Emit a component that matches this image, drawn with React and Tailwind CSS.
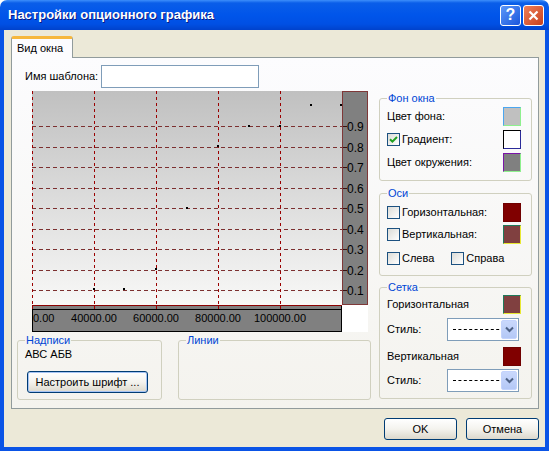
import React from 'react'

const FONT = "font-['Liberation_Sans',Arial,sans-serif]"

// grid geometry of the plot (px inside the chart svg)
const vLines = [0, 62, 124, 186, 248]
const xLabels = ['0.00', '40000.00', '60000.00', '80000.00', '100000.00']
const yLabels = ['0.9', '0.8', '0.7', '0.6', '0.5', '0.4', '0.3', '0.2', '0.1']
const dots = [[279, 14], [309, 14], [217, 35], [248, 35], [186, 55], [155, 117], [124, 178], [92, 198], [62, 198]]

function Chart() {
  return (
    <svg width="336" height="241" className="block ml-[15px] shrink-0" style={{ fontFamily: 'Liberation Sans, Arial, sans-serif' }}>
      <defs>
        <linearGradient id="plotbg" x1="0" y1="0" x2="0" y2="1">
          <stop offset="0" stopColor="#c0c0c0" />
          <stop offset="1" stopColor="#f8f8f7" />
        </linearGradient>
      </defs>
      <rect x="0" y="0" width="310" height="214" fill="url(#plotbg)" />
      {yLabels.map((_, i) => {
        const y = Math.round(35 + i * 20.5) + 0.5
        return <line key={i} x1="0" y1={y} x2="310" y2={y} stroke="#7c3030" strokeDasharray="4 3" />
      })}
      {vLines.map((x) => (
        <line key={x} x1={x + 0.5} y1="0" x2={x + 0.5} y2="214" stroke="#9a0000" strokeDasharray="3 3" />
      ))}
      {dots.map(([x, y], i) => <rect key={i} x={x - 1} y={y - 1} width="2" height="2" fill="#000" />)}

      {/* right value axis */}
      <rect x="310.5" y="0.5" width="25" height="213" fill="#808080" stroke="#7f3838" />
      {yLabels.map((t, i) => {
        const y = Math.round(35 + i * 20.5) + 0.5
        return (
          <g key={t}>
            <line x1="311" y1={y} x2="315" y2={y} stroke="#3a1010" />
            <text x="315" y={y + 4.5} fontSize="12" fill="#000">{t}</text>
          </g>
        )
      })}
      <rect x="310" y="214" width="26" height="27" fill="#fff" />

      {/* bottom axis */}
      <rect x="0.5" y="214.5" width="309" height="26" fill="#808080" stroke="#000" />
      <line x1="0" y1="214.5" x2="310" y2="214.5" stroke="#8b0000" />
      {vLines.map((x) => (
        <line key={x} x1={x + 0.5} y1="215" x2={x + 0.5} y2="218" stroke="#9a0000" />
      ))}
      <line x1="1" y1="218.5" x2="309" y2="218.5" stroke="#000" />
      {vLines.map((x, i) => (
        i === 0
          ? <text key={x} x="1" y="231" fontSize="11" fill="#000">{xLabels[i]}</text>
          : <text key={x} x={x} y="231" fontSize="11" textAnchor="middle" fill="#000">{xLabels[i]}</text>
      ))}
    </svg>
  )
}

function Check({ checked }) {
  return (
    <span className="w-[13px] h-[13px] shrink-0 border border-[#1c5180] bg-linear-to-br from-[#dcdcd7] to-white flex items-center justify-center">
      {checked && (
        <svg width="9" height="9" viewBox="0 0 9 9">
          <path d="M1 4.2 L3.4 6.6 L8 2" stroke="#21a121" strokeWidth="2" fill="none" />
        </svg>
      )}
    </span>
  )
}

function Swatch({ className }) {
  return <span className={`w-[18px] h-[19px] shrink-0 border ${className}`} />
}

function Group({ title, className, children }) {
  return (
    <fieldset className={`border border-[#d0d0bf] rounded-[3px] pl-[7px] pr-[10px] min-w-0 ${className}`}>
      <legend className="px-[1px] leading-[13px] text-[#0046d5]">{title}</legend>
      {children}
    </fieldset>
  )
}

function Combo({ className }) {
  return (
    <div className={`ml-auto mr-[2px] w-[72px] h-[23px] border border-[#7f9db9] bg-white flex items-stretch p-px ${className}`}>
      <div className="flex-1 flex items-center pl-[4px]">
        <svg width="48" height="3"><line x1="0" y1="1.5" x2="48" y2="1.5" stroke="#000" strokeDasharray="3 2.4" /></svg>
      </div>
      <div className="w-[17px] rounded-[2px] border border-[#c3d3fd] bg-linear-to-b from-[#c9d8fc] to-[#b4c8f6] flex items-center justify-center">
        <svg width="9" height="7" viewBox="0 0 9 7">
          <path d="M1 1.5 L4.5 5 L8 1.5" stroke="#4d6185" strokeWidth="2" fill="none" />
        </svg>
      </div>
    </div>
  )
}

function XpButton({ children, className }) {
  return (
    <button className={`h-[22px] rounded-[3px] border border-[#003c74] bg-linear-to-b from-white via-[#f4f3ee] to-[#dcd8cc] text-[11px] text-black ${className}`}>
      {children}
    </button>
  )
}

export default function App() {
  return (
    <div className={`w-[549px] h-[451px] flex flex-col text-[11px] text-black ${FONT}`}>
      {/* title bar */}
      <div className="h-[30px] shrink-0 rounded-t-[7px] bg-[linear-gradient(180deg,#3d8ffb_0%,#0a5ee9_10%,#0055ea_50%,#0050e4_80%,#0042cc_100%)] flex items-center pl-[8px] pr-[5px]">
        <span className="text-white font-bold text-[13px] [text-shadow:1px_1px_#0a1883]">Настройки опционного графика</span>
        <div className="ml-auto flex gap-[2px]">
          <div className="w-[21px] h-[21px] rounded-[3px] border border-white bg-linear-to-br from-[#5c97f8] to-[#1a55dc] flex items-center justify-center text-white font-bold text-[16px] leading-none">?</div>
          <div className="w-[21px] h-[21px] rounded-[3px] border border-white bg-linear-to-br from-[#ef7e58] to-[#c7401b] flex items-center justify-center">
            <svg width="11" height="11" viewBox="0 0 11 11">
              <path d="M1.5 1.5 L9.5 9.5 M9.5 1.5 L1.5 9.5" stroke="#fff" strokeWidth="2.2" />
            </svg>
          </div>
        </div>
      </div>

      {/* body */}
      <div className="flex-1 flex flex-col bg-[#ece9d8] border-x-4 border-b-4 border-[#0a54e6] pl-[7px] pr-[6px] pt-[6px] pb-[7px]">
        <div className="flex">
          <div className="relative z-10 -mb-px w-[62px] h-[22px] rounded-t-[3px] border-t-[3px] border-x border-t-[#f6b73c] border-x-[#919b9c] bg-[#fcfcfe] pl-[5px] flex items-center">
            Вид окна
          </div>
        </div>

        <div className="h-[352px] border border-[#919b9c] bg-linear-to-b from-[#fcfcfe] to-[#f4f3ee] flex flex-col">
          <div className="mt-[7px] ml-[13px] flex items-center">
            <span className="w-[76px]">Имя шаблона:</span>
            <div className="w-[158px] h-[23px] border border-[#7f9db9] bg-white" />
          </div>

          <div className="mt-[3px] pl-[5px] flex items-start gap-[8px]">
            {/* left column */}
            <div className="w-[354px] flex flex-col">
              <Chart />
              <div className="mt-[2px] flex gap-[16px]">
                <Group title="Надписи" className="w-[145px] h-[66px]">
                  <div className="mt-[1px] leading-[13px]">АВС АБВ</div>
                  <XpButton className="mt-[10px] ml-[2px] w-[121px] h-[21px] shadow-[inset_0_0_0_1px_#a6c4f4]">Настроить шрифт ...</XpButton>
                </Group>
                <Group title="Линии" className="w-[193px] h-[66px]" />
              </div>
            </div>

            {/* right column */}
            <div className="mt-[1px] w-[153px] flex flex-col">
              <Group title="Фон окна" className="h-[89px]">
                <div className="mt-[2px] h-[19px] flex items-center justify-between">
                  <span>Цвет фона:</span>
                  <Swatch className="bg-[#c0c0c0] border-t-[#4aa6f0] border-l-[#4aa6f0] border-r-[#8ef08e] border-b-[#8ef08e]" />
                </div>
                <div className="mt-[4px] h-[19px] flex items-center">
                  <Check checked />
                  <span className="ml-[2px]">Градиент:</span>
                  <Swatch className="ml-auto bg-white border-t-[#000000] border-l-[#000000] border-r-[#2b2b9a] border-b-[#2b2b9a]" />
                </div>
                <div className="mt-[4px] h-[19px] flex items-center justify-between">
                  <span>Цвет окружения:</span>
                  <Swatch className="bg-[#808080] border-t-[#7a14a8] border-l-[#7a14a8] border-r-[#8ef08e] border-b-[#8ef08e]" />
                </div>
              </Group>

              <Group title="Оси" className="mt-[6px] h-[89px]">
                <div className="mt-[3px] h-[19px] flex items-center">
                  <Check />
                  <span className="ml-[2px]">Горизонтальная:</span>
                  <Swatch className="ml-auto bg-[#800000] border-[#700000]" />
                </div>
                <div className="mt-[3px] h-[19px] flex items-center">
                  <Check />
                  <span className="ml-[2px]">Вертикальная:</span>
                  <Swatch className="ml-auto bg-[#804040] border-t-[#1f7a5a] border-l-[#1f7a5a] border-r-[#e8e832] border-b-[#e8e832]" />
                </div>
                <div className="mt-[5px] h-[18px] flex items-center">
                  <Check />
                  <span className="ml-[2px]">Слева</span>
                  <span className="ml-[17px]"><Check /></span>
                  <span className="ml-[2px]">Справа</span>
                </div>
              </Group>

              <Group title="Сетка" className="mt-[5px] h-[118px]">
                <div className="mt-[1px] h-[19px] flex items-center justify-between">
                  <span>Горизонтальная</span>
                  <Swatch className="bg-[#804040] border-t-[#1f7a5a] border-l-[#1f7a5a] border-r-[#e8e832] border-b-[#e8e832]" />
                </div>
                <div className="mt-[4px] flex items-center">
                  <span>Стиль:</span>
                  <Combo />
                </div>
                <div className="mt-[6px] h-[19px] flex items-center justify-between">
                  <span>Вертикальная</span>
                  <Swatch className="bg-[#800000] border-[#700000]" />
                </div>
                <div className="mt-[3px] flex items-center">
                  <span>Стиль:</span>
                  <Combo />
                </div>
              </Group>
            </div>
          </div>
        </div>

        <div className="mt-[9px] flex justify-end gap-[9px]">
          <XpButton className="w-[73px]">OK</XpButton>
          <XpButton className="w-[73px]">Отмена</XpButton>
        </div>
      </div>
    </div>
  )
}
